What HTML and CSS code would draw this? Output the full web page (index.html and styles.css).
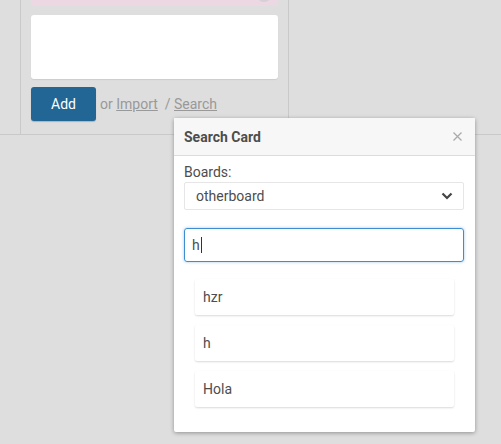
FILE: index.html
```html
<!DOCTYPE html>
<html lang="en">
<head>
  <meta charset="UTF-8">
  <title>Board</title>
  <link rel="stylesheet" href="styles.css">
</head>
<body>

<div class="board">
  <div class="list">
    <div class="minicard minicard-pink">
      <span class="minicard-avatar"></span>
    </div>
    <textarea class="composer"></textarea>
    <div class="composer-actions">
      <button class="btn-add">Add</button>
      <span class="or">or <a href="#">Import</a> &nbsp;/ <a href="#">Search</a></span>
    </div>
  </div>
</div>

<div class="popup">
  <div class="popup-header">
    <span class="popup-title">Search Card</span>
    <svg class="popup-close" width="9" height="9" viewBox="0 0 9 9"><path d="M0.5 0.5 L8.5 8.5 M8.5 0.5 L0.5 8.5" stroke="#aaa" stroke-width="1.3"/></svg>
  </div>
  <div class="popup-body">
    <label class="field-label" for="boards">Boards:</label>
    <div class="select">
      <span>otherboard</span>
      <svg width="12" height="8" viewBox="0 0 12 8"><path d="M1.5 1.5 L6 6 L10.5 1.5" fill="none" stroke="#444" stroke-width="2.2"/></svg>
    </div>
    <div class="search-input">h<span class="caret"></span></div>
    <div class="results">
      <div class="result">hzr</div>
      <div class="result">h</div>
      <div class="result">Hola</div>
    </div>
  </div>
</div>

</body>
</html>
```

FILE: styles.css
```css
body {
  margin: 0;
  background: #dedede;
  font-family: Roboto, "Liberation Sans", sans-serif;
  color: #4d4d4d;
  height: 444px;
  overflow: hidden;
}
.board {
  border-bottom: 1px solid #c9c9c9;
  padding-left: 20px;
}
.list {
  width: 247px;
  border-left: 1px solid #c9c9c9;
  border-right: 1px solid #c9c9c9;
  padding: 0 10px 13px 10px;
}
.minicard-pink {
  position: relative;
  height: 6px;
  background: #ebd8e3;
  border-radius: 0 0 2px 2px;
  overflow: hidden;
}
.minicard-avatar {
  position: absolute;
  right: 6px;
  top: -14px;
  width: 16px;
  height: 16px;
  border-radius: 50%;
  background: #d6d0d4;
}
.composer {
  display: block;
  box-sizing: border-box;
  width: 100%;
  height: 64px;
  margin-top: 9px;
  border: none;
  border-radius: 3px;
  background: white;
  box-shadow: 0 1px 1px rgba(0,0,0,0.08);
  resize: none;
}
.composer-actions {
  display: flex;
  align-items: center;
  margin-top: 8px;
}
.btn-add {
  width: 65px;
  height: 34px;
  background: #216694;
  color: white;
  border: none;
  border-radius: 3px;
  font-family: inherit;
  font-size: 14px;
  box-shadow: 0 1px 1px rgba(0,0,0,0.2);
}
.or {
  margin-left: 4px;
  color: #999;
  font-size: 14px;
}
.or a {
  color: #999;
}
.popup {
  position: absolute;
  left: 174px;
  top: 118px;
  width: 301px;
  background: white;
  border-radius: 2px;
  box-shadow: 0 1px 4px rgba(0,0,0,0.35);
}
.popup-header {
  display: flex;
  justify-content: space-between;
  align-items: center;
  height: 37px;
  padding: 0 13px 0 10px;
  background: #f7f7f7;
  border-bottom: 1px solid #dcdcdc;
}
.popup-title {
  font-weight: bold;
  font-size: 14px;
  color: #4d4d4d;
}
.popup-body {
  padding: 7px 11px 25px 10px;
}
.field-label {
  display: block;
  font-size: 14px;
  line-height: 18px;
  color: #4d4d4d;
}
.select {
  display: flex;
  justify-content: space-between;
  align-items: center;
  box-sizing: border-box;
  height: 28px;
  margin-top: 1px;
  padding: 0 10px 0 11px;
  border: 1px solid #e6e6e6;
  border-radius: 2px;
  font-size: 14px;
  color: #4d4d4d;
}
.search-input {
  box-sizing: border-box;
  height: 34px;
  margin-top: 18px;
  padding: 0 7px;
  border: 1px solid #3d8ed0;
  border-radius: 3px;
  box-shadow: 0 0 3px rgba(61,142,208,0.5);
  font-size: 14px;
  line-height: 32px;
  color: #4d4d4d;
}
.caret {
  display: inline-block;
  width: 1px;
  height: 16px;
  background: #333;
  vertical-align: -3px;
  margin-left: 1px;
}
.results {
  display: flex;
  flex-direction: column;
  gap: 10px;
  padding: 17px 10px 0 11px;
}
.result {
  height: 36px;
  line-height: 36px;
  padding: 0 8px;
  background: white;
  border-radius: 2px;
  box-shadow: 0 1px 2px rgba(0,0,0,0.15);
  font-size: 14px;
  color: #4d4d4d;
}
```
